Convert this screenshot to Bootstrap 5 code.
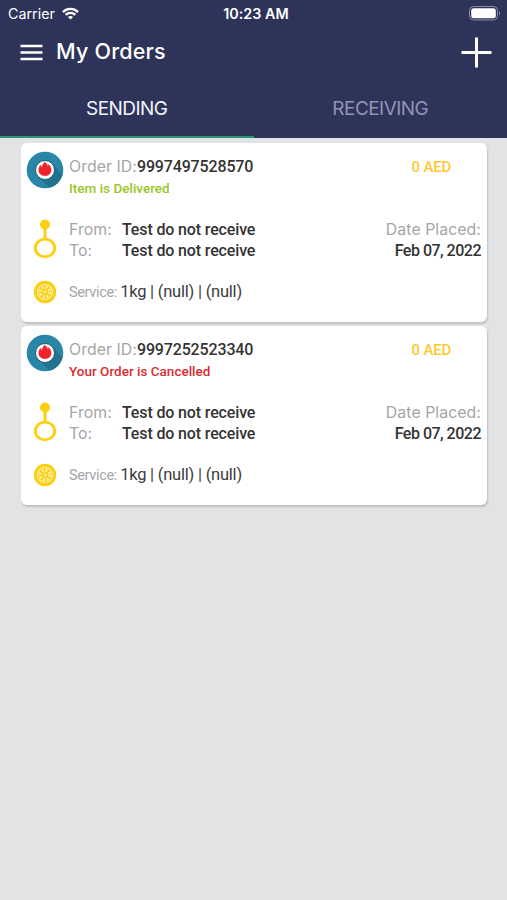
<!DOCTYPE html>
<html lang="en">
<head>
<meta charset="utf-8">
<meta name="viewport" content="width=device-width, initial-scale=1">
<title>My Orders</title>
<link rel="stylesheet" href="https://cdn.jsdelivr.net/npm/bootstrap@5.3.0/dist/css/bootstrap.min.css">
<style>
body{background:#e2e3e5;font-family:Inter,"Liberation Sans",sans-serif;min-height:900px;overflow:hidden}
svg{display:block;flex:none}
.app-head{background:#2e3359;height:138px;color:#fff}
.status-bar{height:27px;padding:0 6px 0 8px;font-size:14.3px;display:grid;grid-template-columns:1fr auto 1fr}
.clock{padding-left:3px;letter-spacing:.05px}
.title-bar{height:50px;padding:0 15px 0 20px;gap:13px}
.title-bar h1{font-size:21.5px;font-weight:500;letter-spacing:.2px}
.tab-row{height:61px;font-size:19px}
.tab-row .nav-link{color:#9394b3;border:0;border-bottom:2px solid transparent;border-radius:0;padding:5px 0 0;letter-spacing:-.55px;background:none}
.tab-row .nav-link.active{color:#f2f3fa;border-color:#289672;background:none}
.order-list{padding:5px 20px 0 21px;gap:4.5px}
.order-card{height:178.7px;border:0;border-radius:6px;box-shadow:1px 2px 2px #bfc0c2;padding-right:6px;white-space:nowrap}
.icon-col{width:48px;flex:none}
.lbl{color:#a5a5a8;font-size:15.8px;line-height:21px;letter-spacing:.08px}
.val{color:#333;font-family:Roboto,sans-serif;font-weight:500;font-size:16px;line-height:21px}
.place{letter-spacing:-.14px}
.num{letter-spacing:-.15px}
.when{letter-spacing:-.5px}
.state{font-family:Roboto,sans-serif;font-weight:500;font-size:13.5px;line-height:20px;padding-top:1px}
.done{color:#9ac52a}.cancelled{color:#dc2b30}
.price{color:#fdc92c;font-size:15px;line-height:21px;padding:1px 30px 0 0;letter-spacing:-.2px}
.svc{font-family:Roboto,sans-serif;color:#a5a5a8;font-size:14.5px;line-height:22px;letter-spacing:-.35px;padding-top:2px}
.svc b{color:#3c3c3c;font-weight:400;font-size:16.5px;letter-spacing:-.22px}
.key{width:53px}
.sec-a{height:76px;padding-top:13px}.sec-b{height:60px}
.head-line{height:21px;line-height:21px}
</style>
</head>
<body>
<svg width="0" height="0" class="position-absolute">
<defs>
<symbol id="flame" viewBox="0 0 38 38"><circle cx="19" cy="19" r="18.3" fill="#2a86a6"/><path d="M26 12 36.3 24A18.3 18.3 0 0 1 24 36.5L12 26z" fill="#21718f"/><circle cx="19" cy="19" r="9.500" fill="#fff" stroke="#245b70" stroke-width="1"/><path d="M18.500 11.200c2 1 3 2.600 3 4.300.7-.3 1.100-.9 1.100-2 1.500 1.600 2.700 3.700 2.500 6-.3 3.200-2.800 5.200-6.100 5.200s-6-2-6.200-5.200c-.1-2 .6-3.700 1.800-5.400 0 1.200.4 2 1.100 2.300.5-2 1.800-3.300 2.800-5.200z" fill="#f0232b" stroke="#f0232b" stroke-width=".6"/></symbol>
<symbol id="route" viewBox="0 0 24 40"><circle cx="12" cy="5.500" r="5" fill="#fdcf12"/><path d="M12 7v13" stroke="#fdcf12" stroke-width="3"/><ellipse cx="12" cy="29" rx="9.700" ry="8.900" fill="#fff" stroke="#fdcf12" stroke-width="2.900"/></symbol>
<symbol id="wheel" viewBox="0 0 24 24"><circle cx="12" cy="12" r="11.200" fill="#fdcf12"/><g fill="none" stroke="#fff3ad"><circle cx="12" cy="12" r="7.500" stroke-width="1.200"/><circle cx="12" cy="12" r="4.800" stroke-width="3" stroke-dasharray="1.900 1.870"/><circle cx="12" cy="12" r="1.300" stroke-width="1"/></g></symbol>
</defs></svg>
<header class="app-head d-flex flex-column">
<div class="status-bar align-items-center">
<div class="d-flex align-items-center"><span>Carrier</span>
<svg style="margin-left:7px" width="17" height="13" viewBox="0 0 17 13" fill="none" stroke="#fff" stroke-width="2.300"><path d="M.9 5.100C5.200.9 11.800.9 16.100 5.100M3.700 7.900c2.700-2.600 6.900-2.600 9.600 0"/><path d="M8.500 12.500 5.900 9.900c1.500-1.300 3.700-1.300 5.200 0z" fill="#fff" stroke="none"/></svg></div>
<div class="fw-semibold clock">10:23 AM</div>
<svg class="ms-auto" width="32" height="15" viewBox="0 0 32 15"><rect x=".5" y=".5" width="28" height="13.500" rx="4" fill="none" stroke="#8a8ca6"/><rect x="2.200" y="2.200" width="24.600" height="10" rx="2.500" fill="#fff"/><path d="M30 5q2 2 0 4.500z" fill="#8a8ca6"/></svg>
</div>
<div class="title-bar d-flex align-items-center">
<svg width="23" height="17" viewBox="0 0 23 17" stroke="#fff" stroke-width="2.300"><path d="M.5 2h22M.5 8.500h22M.5 15h22"/></svg>
<h1 class="mb-0 flex-grow-1">My Orders</h1>
<svg width="31" height="31" viewBox="0 0 31 31" stroke="#fff" stroke-width="3"><path d="M.5 15.500h30M15.500.5v30"/></svg>
</div>
<nav class="nav nav-justified tab-row"><a class="nav-link active d-flex align-items-center justify-content-center" href="#"><span>SENDING</span></a><a class="nav-link d-flex align-items-center justify-content-center" href="#"><span>RECEIVING</span></a></nav>
</header>
<main class="order-list d-flex flex-column">
<article class="card order-card">
<div class="d-flex sec-a"><div class="icon-col"><svg class="mx-auto" style="margin-top:-5px" width="38" height="38"><use href="#flame"/></svg></div>
<div class="flex-grow-1"><div class="head-line"><span class="lbl">Order ID:</span><span class="val num">9997497528570</span></div><div class="state done">Item is Delivered</div></div><div class="val price">0 AED</div></div>
<div class="d-flex sec-b"><div class="icon-col"><svg class="mx-auto" width="24" height="40"><use href="#route"/></svg></div>
<div class="flex-grow-1"><div class="d-flex"><span class="lbl key">From:</span><span class="val place">Test do not receive</span></div><div class="d-flex"><span class="lbl key">To:</span><span class="val place">Test do not receive</span></div></div>
<div class="text-end"><div class="lbl">Date Placed:</div><div class="val when">Feb 07, 2022</div></div></div>
<div class="d-flex align-items-center"><div class="icon-col"><svg class="mx-auto" width="24" height="24"><use href="#wheel"/></svg></div><div class="svc">Service: <b>1kg | (null) | (null)</b></div></div>
</article>
<article class="card order-card">
<div class="d-flex sec-a"><div class="icon-col"><svg class="mx-auto" style="margin-top:-5px" width="38" height="38"><use href="#flame"/></svg></div>
<div class="flex-grow-1"><div class="head-line"><span class="lbl">Order ID:</span><span class="val num">9997252523340</span></div><div class="state cancelled">Your Order is Cancelled</div></div><div class="val price">0 AED</div></div>
<div class="d-flex sec-b"><div class="icon-col"><svg class="mx-auto" width="24" height="40"><use href="#route"/></svg></div>
<div class="flex-grow-1"><div class="d-flex"><span class="lbl key">From:</span><span class="val place">Test do not receive</span></div><div class="d-flex"><span class="lbl key">To:</span><span class="val place">Test do not receive</span></div></div>
<div class="text-end"><div class="lbl">Date Placed:</div><div class="val when">Feb 07, 2022</div></div></div>
<div class="d-flex align-items-center"><div class="icon-col"><svg class="mx-auto" width="24" height="24"><use href="#wheel"/></svg></div><div class="svc">Service: <b>1kg | (null) | (null)</b></div></div>
</article>
</main>
<script src="https://cdn.jsdelivr.net/npm/bootstrap@5.3.0/dist/js/bootstrap.bundle.min.js"></script>
</body>
</html>
